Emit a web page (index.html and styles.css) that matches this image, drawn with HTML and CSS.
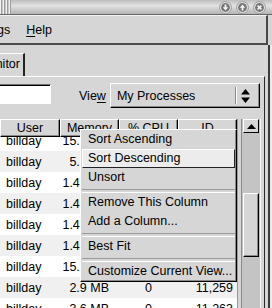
FILE: index.html
```html
<!DOCTYPE html>
<html lang="en">
<head>
    <meta charset="UTF-8">
    <title>System Monitor</title>
    <link rel="stylesheet" href="styles.css">
</head>
<body>
    <div class="titlebar">
        <div class="grip"></div>
        <div class="wbtns">
            <svg class="wbtn" viewBox="0 0 13 13"><circle cx="6.5" cy="6.5" r="6" fill="#dcdcdc" stroke="#a0a0a0"/><circle cx="6.5" cy="6.5" r="4.4" fill="#777"/><path d="M5.6 3.4h1.8v2.9h1.8L6.5 9.4 3.8 6.3h1.8z" fill="#f4f4f4"/></svg>
            <svg class="wbtn" viewBox="0 0 13 13"><circle cx="6.5" cy="6.5" r="6" fill="#dcdcdc" stroke="#a0a0a0"/><circle cx="6.5" cy="6.5" r="4.4" fill="#777"/><path d="M5.6 9.6h1.8V6.7h1.8L6.5 3.6 3.8 6.7h1.8z" fill="#f4f4f4"/></svg>
            <svg class="wbtn" viewBox="0 0 13 13"><circle cx="6.5" cy="6.5" r="6" fill="#dcdcdc" stroke="#a0a0a0"/><circle cx="6.5" cy="6.5" r="4.4" fill="#777"/><path d="M4.6 4.6l3.8 3.8M8.4 4.6L4.6 8.4" stroke="#f4f4f4" stroke-width="1.5"/></svg>
        </div>
    </div>

    <div class="menubar">
        <span class="cut">Settings</span>
        <span><u>H</u>elp</span>
    </div>

    <div class="lower">
        <div class="main">
            <div class="tabs">
                <div class="tab">System Monitor</div>
            </div>
            <div class="panel">
                <div class="search">
                    <div class="entry"></div>
                    <span class="view-label">Vie<u>w</u></span>
                    <div class="combo">
                        <span>My Processes</span>
                        <div class="combo-sep"></div>
                        <svg class="combo-arrows" viewBox="0 0 9 14"><path d="M0 5.5L4.5 0 9 5.5z M0 8.5L4.5 14 9 8.5z" fill="#000"/></svg>
                    </div>
                </div>

                <div class="tree-area">
                    <div class="tree">
                        <div class="thead">
                            <div class="th c-user">User</div>
                            <div class="th c-mem">Memory</div>
                            <div class="th c-cpu">% CPU</div>
                            <div class="th c-id">ID</div>
                        </div>
                        <div class="tbody">
                            <div class="tr"><span class="c-user">billday</span><span class="c-mem">15.1 MB</span><span class="c-cpu">0</span><span class="c-id">11,201</span></div>
                            <div class="tr"><span class="c-user">billday</span><span class="c-mem">5.1 MB</span><span class="c-cpu">0</span><span class="c-id">11,215</span></div>
                            <div class="tr"><span class="c-user">billday</span><span class="c-mem">1.41 MB</span><span class="c-cpu">0</span><span class="c-id">11,219</span></div>
                            <div class="tr"><span class="c-user">billday</span><span class="c-mem">1.42 MB</span><span class="c-cpu">0</span><span class="c-id">11,223</span></div>
                            <div class="tr"><span class="c-user">billday</span><span class="c-mem">1.43 MB</span><span class="c-cpu">0</span><span class="c-id">11,227</span></div>
                            <div class="tr"><span class="c-user">billday</span><span class="c-mem">1.44 MB</span><span class="c-cpu">0</span><span class="c-id">11,231</span></div>
                            <div class="tr"><span class="c-user">billday</span><span class="c-mem">15.3 MB</span><span class="c-cpu">0</span><span class="c-id">11,245</span></div>
                            <div class="tr"><span class="c-user">billday</span><span class="c-mem">2.9 MB</span><span class="c-cpu">0</span><span class="c-id">11,259</span></div>
                            <div class="tr"><span class="c-user">billday</span><span class="c-mem">3.6 MB</span><span class="c-cpu">0</span><span class="c-id">11,263</span></div>
                        </div>
                    </div>
                    <div class="vscroll">
                        <div class="sbtn"><svg viewBox="0 0 9 5" width="9" height="5"><path d="M0 5L4.5 0 9 5z" fill="#000"/></svg></div>
                        <div class="slider"></div>
                    </div>
                </div>
            </div>
        </div>
        <div class="edge"></div>
    </div>

    <!-- column header popup -->
    <div class="popup">
        <div class="mi">Sort Ascending</div>
        <div class="mi hl">Sort Descending</div>
        <div class="mi">Unsort</div>
        <div class="msep"></div>
        <div class="mi">Remove This Column</div>
        <div class="mi">Add a Column...</div>
        <div class="msep"></div>
        <div class="mi">Best Fit</div>
        <div class="msep"></div>
        <div class="mi">Customize Current View...</div>
    </div>
</body>
</html>
```

FILE: styles.css
```css
* {
    box-sizing: border-box;
}
body {
    margin: 0;
    width: 272px;
    height: 308px;
    overflow: hidden;
    position: relative;
    background: #d6d6d6;
    color: #000;
    font-family: "Liberation Sans", Arial, sans-serif;
    font-size: 12.5px;
}
u {
    text-decoration-thickness: 1px;
    text-underline-offset: 2px;
}
.titlebar {
    height: 15px;
    display: flex;
    justify-content: space-between;
    align-items: center;
    background: linear-gradient(#bdbdbd, #e2e2e2 40%, #b4b4b4);
    border-bottom: 1px solid #666;
}
.grip {
    width: 11px;
    height: 14px;
    background: repeating-linear-gradient(90deg, #f2f2f2 0 1px, #9c9c9c 1px 2px, #c6c6c6 2px 3px);
}
.wbtns {
    display: flex;
    gap: 4px;
    padding-right: 6px;
}
.wbtn {
    width: 13px;
    height: 13px;
    display: block;
}
.menubar {
    display: flex;
    align-items: center;
    width: 268px;
    height: 30px;
    border-top: 1px solid #f4f4f4;
    border-right: 2px solid #4a4a4a;
    border-bottom: 2px solid #4a4a4a;
}
.menubar span {
    padding: 0 8px;
}
.menubar .cut {
    margin-left: -43px;
}
.lower {
    display: flex;
    height: 263px;
}
.main {
    width: 265px;
    display: flex;
    flex-direction: column;
}
.edge {
    width: 7px;
    background: linear-gradient(90deg, #d6d6d6 0 3px, #3c3c3c 3px 5px, #ececec 5px 7px);
}
.tabs {
    height: 31px;
    padding-top: 8px;
    display: flex;
}
.tab {
    width: 100px;
    height: 23px;
    margin-left: -75px;
    padding-right: 3px;
    text-align: right;
    line-height: 21px;
    border-top: 1px solid #fff;
    border-left: 1px solid #fff;
    border-right: 2px solid #222;
}
.panel {
    flex: 1;
    border-top: 1px solid #fff;
    border-right: 1px solid #2a2a2a;
}
.search {
    height: 25px;
    margin-top: 6px;
    display: flex;
    align-items: center;
}
.entry {
    width: 61px;
    height: 20px;
    margin-left: -10px;
    margin-top: -4px;
    background: #fff;
    border: 1px solid;
    border-color: #6e6e6e #fff #fff #6e6e6e;
    box-shadow: inset 1px 1px #000;
}
.view-label {
    margin-left: 28px;
}
.combo {
    width: 150px;
    height: 25px;
    margin-left: 4px;
    display: flex;
    align-items: center;
    padding-left: 6px;
    border: 1px solid;
    border-color: #fff #000 #000 #fff;
    box-shadow: inset -1px -1px #8a8a8a;
}
.combo-sep {
    margin-left: auto;
    width: 2px;
    height: 17px;
    border-left: 1px solid #8a8a8a;
    border-right: 1px solid #fff;
}
.combo-arrows {
    width: 9px;
    height: 14px;
    margin: 0 9px 0 4px;
}
.tree-area {
    margin-top: 11px;
    display: flex;
    flex: 1;
    min-height: 0;
}
.tree {
    width: 238px;
    border-right: 1px solid #9a9a9a;
    display: flex;
    flex-direction: column;
}
.thead {
    display: flex;
    height: 18px;
}
.th {
    text-align: center;
    line-height: 16px;
    border: 1px solid;
    border-color: #fff #000 #000 #fff;
    box-shadow: inset -1px -1px #8a8a8a;
    white-space: nowrap;
    overflow: hidden;
}
.c-user {
    width: 60px;
}
.c-mem {
    width: 59px;
}
.c-cpu {
    width: 59px;
}
.c-id {
    width: 59px;
}
.tbody {
    flex: 1;
    overflow: hidden;
    background: #fff;
}
.tr {
    display: flex;
    align-items: center;
    height: 21px;
    white-space: nowrap;
}
.tr:first-child {
    margin-top: -7px;
}
.tr:nth-child(even) {
    background: #f0f0f0;
}
.tr .c-user {
    padding-left: 6px;
}
.tr .c-mem {
    text-align: right;
    padding-right: 10px;
}
.tr .c-cpu {
    text-align: center;
}
.tr .c-id {
    text-align: right;
    padding-right: 4px;
}
.vscroll {
    width: 20px;
    margin-left: 3px;
    padding: 0 1px;
    background: #c4c4c4;
    border-left: 1px solid #8a8a8a;
    border-right: 1px solid #f6f6f6;
}
.sbtn {
    height: 14px;
    display: flex;
    align-items: center;
    justify-content: center;
    background: #d6d6d6;
    border: 1px solid;
    border-color: #fff #000 #000 #fff;
}
.slider {
    height: 64px;
    margin-top: 60px;
    background: #d6d6d6;
    border: 1px solid;
    border-color: #fff #000 #000 #fff;
    box-shadow: inset -1px -1px #8a8a8a;
}
.popup {
    position: absolute;
    left: 80px;
    top: 129px;
    width: 157px;
    padding: 0 1px;
    background: #d6d6d6;
    border: 1px solid;
    border-color: #fff #000 #000 #fff;
    box-shadow: inset -1px -1px #8a8a8a;
}
.mi {
    height: 19px;
    line-height: 19px;
    padding-left: 6px;
    white-space: nowrap;
}
.mi.hl {
    padding-left: 5px;
    line-height: 17px;
    background: #ececec;
    border: 1px solid;
    border-color: #fff #222 #222 #fff;
}
.msep {
    height: 6px;
    padding-top: 2px;
}
.msep::before {
    content: "";
    display: block;
    height: 2px;
    border-top: 1px solid #9a9a9a;
    border-bottom: 1px solid #fff;
}
```
